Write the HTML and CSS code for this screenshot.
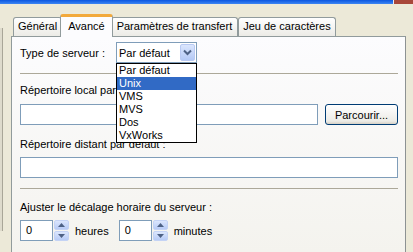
FILE: index.html
```html
<!DOCTYPE html>
<html lang="fr">
<head>
    <meta charset="UTF-8">
    <title>Options du site</title>
    <link rel="stylesheet" href="styles.css">
</head>
<body>
    <div class="titlebar"><div class="close-edge"></div></div>

    <div class="window">
        <div class="frame-left"></div>

        <div class="dialog">
            <!-- Onglets -->
            <div class="tabs">
                <div class="tab">Général</div>
                <div class="tab active">Avancé</div>
                <div class="tab">Paramètres de transfert</div>
                <div class="tab">Jeu de caractères</div>
            </div>

            <div class="panel">
                <div class="row server-row">
                    <span class="label-inline">Type de serveur :</span>
                    <div class="select">
                        <span class="select-value">Par défaut</span>
                        <span class="select-btn">
                            <svg width="9" height="7" viewBox="0 0 9 7">
                                <path d="M1 1.5 L4.5 5 L8 1.5" fill="none" stroke="#4d6185" stroke-width="2"/>
                            </svg>
                        </span>
                        <ul class="dropdown">
                            <li>Par défaut</li>
                            <li class="selected">Unix</li>
                            <li>VMS</li>
                            <li>MVS</li>
                            <li>Dos</li>
                            <li>VxWorks</li>
                        </ul>
                    </div>
                </div>

                <div class="separator"></div>

                <div class="field-label">Répertoire local par défaut :</div>
                <div class="row">
                    <div class="input grow"></div>
                    <button class="btn">Parcourir...</button>
                </div>

                <div class="field-label">Répertoire distant par défaut :</div>
                <div class="input"></div>

                <div class="separator"></div>

                <div class="field-label">Ajuster le décalage horaire du serveur :</div>
                <div class="row spin-row">
                    <div class="spin">
                        <div class="input spin-input">0</div>
                        <div class="spin-btns">
                            <span class="spin-btn"><svg width="7" height="4" viewBox="0 0 7 4"><path d="M0 4 L3.5 0 L7 4 Z" fill="#4d6185"/></svg></span>
                            <span class="spin-btn"><svg width="7" height="4" viewBox="0 0 7 4"><path d="M0 0 L3.5 4 L7 0 Z" fill="#4d6185"/></svg></span>
                        </div>
                    </div>
                    <span class="unit">heures</span>
                    <div class="spin">
                        <div class="input spin-input">0</div>
                        <div class="spin-btns">
                            <span class="spin-btn"><svg width="7" height="4" viewBox="0 0 7 4"><path d="M0 4 L3.5 0 L7 4 Z" fill="#4d6185"/></svg></span>
                            <span class="spin-btn"><svg width="7" height="4" viewBox="0 0 7 4"><path d="M0 0 L3.5 4 L7 0 Z" fill="#4d6185"/></svg></span>
                        </div>
                    </div>
                    <span class="unit">minutes</span>
                </div>
            </div>
        </div>
    </div>
</body>
</html>
```

FILE: styles.css
```css
* {
    box-sizing: border-box;
    margin: 0;
    padding: 0;
}

body {
    font-family: 'Liberation Sans', Arial, sans-serif;
    font-size: 11px;
    color: #000;
    background-color: #ece9d8;
    width: 413px;
    height: 252px;
    overflow: hidden;
}

/* bas de la barre de titre */
.titlebar {
    height: 4px;
    background: linear-gradient(#0a56e0, #3d86f2);
    display: flex;
    justify-content: flex-end;
}

.close-edge {
    width: 20px;
    height: 4px;
    background-color: #a8473a;
    border-left: 1px solid #e8ecf8;
}

.window {
    display: flex;
    padding-top: 10px;
}

.frame-left {
    width: 3px;
    height: 203px;
    margin-top: 14px;
    background-color: #dedbcc;
    border-right: 1px solid #a9a698;
}

.dialog {
    margin-left: 8px;
    width: 395px;
}

/* Onglets */
.tabs {
    display: flex;
    align-items: flex-end;
    padding-left: 2px;
    height: 23px;
    margin-bottom: -1px;
    position: relative;
    z-index: 1;
}

.tab {
    height: 19px;
    margin-bottom: 1px;
    padding: 0 4px;
    line-height: 17px;
    border: 1px solid #919b9c;
    border-bottom: none;
    border-radius: 3px 3px 0 0;
    background: linear-gradient(#ffffff, #ecebe6);
    white-space: nowrap;
}

.tab.active {
    height: 23px;
    margin: 0 -2px;
    padding: 0 7px;
    line-height: 18px;
    border-top: 3px solid #f2a93b;
    background: #fcfcfe;
    position: relative;
    z-index: 2;
}

.tab.active + .tab {
    padding: 0 5px;
}

.panel {
    height: 216px;
    border: 1px solid #919b9c;
    border-right-color: #8d9293;
    border-bottom: none;
    background: linear-gradient(#fcfcfe, #f4f3ee);
    padding: 5px 7px 0 8px;
}

.row {
    display: flex;
    align-items: center;
}

.server-row {
    height: 21px;
}

.label-inline {
    width: 96px;
}

/* Liste déroulante */
.select {
    position: relative;
    width: 81px;
    height: 21px;
    border: 1px solid #7f9db9;
    background-color: #fff;
    display: flex;
    align-items: center;
}

.select-value {
    flex: 1;
    padding-left: 2px;
}

.select-btn {
    width: 15px;
    height: 17px;
    margin-right: 1px;
    border: 1px solid #b9caf3;
    border-radius: 2px;
    background: linear-gradient(#dbe6fd, #b4c9f6);
    display: flex;
    align-items: center;
    justify-content: center;
}

.dropdown {
    position: absolute;
    left: -1px;
    top: 20px;
    width: 81px;
    list-style: none;
    border: 1px solid #000;
    background-color: #fff;
    z-index: 5;
}

.dropdown li {
    height: 13px;
    line-height: 13px;
    padding-left: 2px;
}

.dropdown li.selected {
    background-color: #316ac5;
    color: #fff;
}

.separator {
    height: 1px;
    background-color: #aca899;
    margin: 10px 0 10px;
}

.field-label {
    height: 13px;
    line-height: 13px;
    margin-bottom: 6px;
}

.input {
    height: 21px;
    border: 1px solid #7f9db9;
    background-color: #fff;
}

.grow {
    flex: 1;
}

.row + .field-label {
    margin-top: 13px;
}

.input + .separator {
    margin-top: 10px;
    margin-bottom: 12px;
}

.btn {
    font-family: inherit;
    font-size: 11px;
    color: #000;
    width: 73px;
    height: 21px;
    margin-left: 7px;
    margin-top: 1px;
    border: 1px solid #003c74;
    border-radius: 3px;
    background: linear-gradient(#ffffff, #ecebe6 85%, #d6d0c5);
}

/* Champs numériques */
.spin-row {
    height: 21px;
}

.spin {
    display: flex;
    align-items: center;
}

.spin-input {
    width: 33px;
    line-height: 19px;
    padding-left: 5px;
}

.spin-btns {
    display: flex;
    flex-direction: column;
    gap: 1px;
    margin-left: 1px;
}

.spin-btn {
    width: 15px;
    height: 10px;
    border: 1px solid #c4d3f5;
    border-radius: 2px;
    background: linear-gradient(#dbe6fd, #b7cbf6);
    display: flex;
    align-items: center;
    justify-content: center;
}

.unit {
    margin: 0 10px 0 6px;
}
```
